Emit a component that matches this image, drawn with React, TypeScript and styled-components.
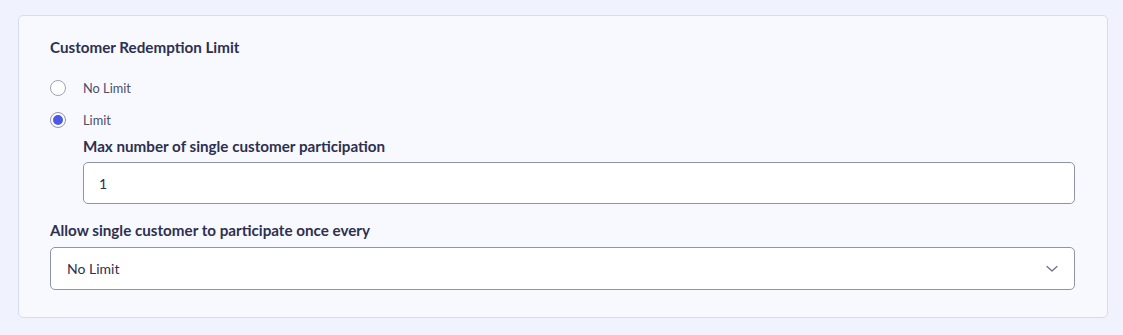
import React, { useState } from "react";
import styled, { createGlobalStyle } from "styled-components";

const GlobalStyle = createGlobalStyle`
  html, body { margin: 0; padding: 0; background: #f0f2fd; }
  body { font-family: Lato, "Open Sans", Arial, sans-serif; }
  * { box-sizing: border-box; }
`;

const Page = styled.div`
  padding: 15px 15px 17px 18px;
  background: #f0f2fd;
`;

const Card = styled.section`
  background: #f8f9fe;
  border: 1px solid #d9dbf3;
  border-radius: 5px;
  padding: 21px 32px 27px 31px;
  display: flex;
  flex-direction: column;
`;

const Title = styled.h3`
  margin: 0;
  font-size: 15.2px;
  line-height: 20px;
  font-weight: 700;
  color: #2d3050;
`;

const RadioGroup = styled.div`
  display: flex;
  flex-direction: column;
  margin-top: 15px;
`;

const RadioRow = styled.label`
  display: flex;
  align-items: center;
  height: 32px;
  gap: 17px;
  cursor: pointer;
`;

const RadioCircle = styled.span<{ $checked: boolean }>`
  width: 16px;
  height: 16px;
  border-radius: 50%;
  border: 1px solid ${(p) => (p.$checked ? "#8f93b3" : "#9ea1b5")};
  background: #ffffff;
  display: flex;
  align-items: center;
  justify-content: center;
  &::after {
    content: "";
    width: 10px;
    height: 10px;
    border-radius: 50%;
    background: #4c58e6;
    display: ${(p) => (p.$checked ? "block" : "none")};
  }
`;

const RadioLabel = styled.span`
  font-size: 12.8px;
  color: #4a4d6b;
`;

const SubSection = styled.div`
  display: flex;
  flex-direction: column;
  padding-left: 33px;
`;

const FieldLabel = styled.div`
  font-size: 15.2px;
  line-height: 20px;
  font-weight: 700;
  color: #2d3050;
`;

const TextInput = styled.input`
  margin-top: 6px;
  height: 42px;
  width: 100%;
  border: 1px solid #8e94aa;
  border-radius: 5px;
  background: #ffffff;
  padding: 0 15px;
  font-family: Lato, Arial, sans-serif;
  font-size: 14px;
  color: #2d3050;
  outline: none;
`;

const Field = styled.div<{ $top: number }>`
  display: flex;
  flex-direction: column;
  margin-top: ${(p) => p.$top}px;
`;

const Select = styled.div`
  margin-top: 7px;
  height: 43px;
  border: 1px solid #8e94aa;
  border-radius: 5px;
  background: #ffffff;
  display: flex;
  align-items: center;
  justify-content: space-between;
  padding: 0 16px 0 16px;
  font-size: 14px;
  color: #2d3050;
`;

const Chevron = () => (
  <svg width="12" height="8" viewBox="0 0 12 8" fill="none">
    <path d="M1 1.5L6 6L11 1.5" stroke="#6d7190" strokeWidth="1.3" strokeLinecap="round" strokeLinejoin="round" />
  </svg>
);

export default function App() {
  const [limited, setLimited] = useState(true);
  return (
    <>
      <GlobalStyle />
      <Page>
        <Card>
          <Title>Customer Redemption Limit</Title>
          <RadioGroup>
            <RadioRow onClick={() => setLimited(false)}>
              <RadioCircle $checked={!limited} />
              <RadioLabel>No Limit</RadioLabel>
            </RadioRow>
            <RadioRow onClick={() => setLimited(true)}>
              <RadioCircle $checked={limited} />
              <RadioLabel>Limit</RadioLabel>
            </RadioRow>
          </RadioGroup>
          <SubSection>
            <FieldLabel>Max number of single customer participation</FieldLabel>
            <TextInput defaultValue="1" />
          </SubSection>
          <Field $top={16}>
            <FieldLabel>Allow single customer to participate once every</FieldLabel>
            <Select>
              <span>No Limit</span>
              <Chevron />
            </Select>
          </Field>
        </Card>
      </Page>
    </>
  );
}
